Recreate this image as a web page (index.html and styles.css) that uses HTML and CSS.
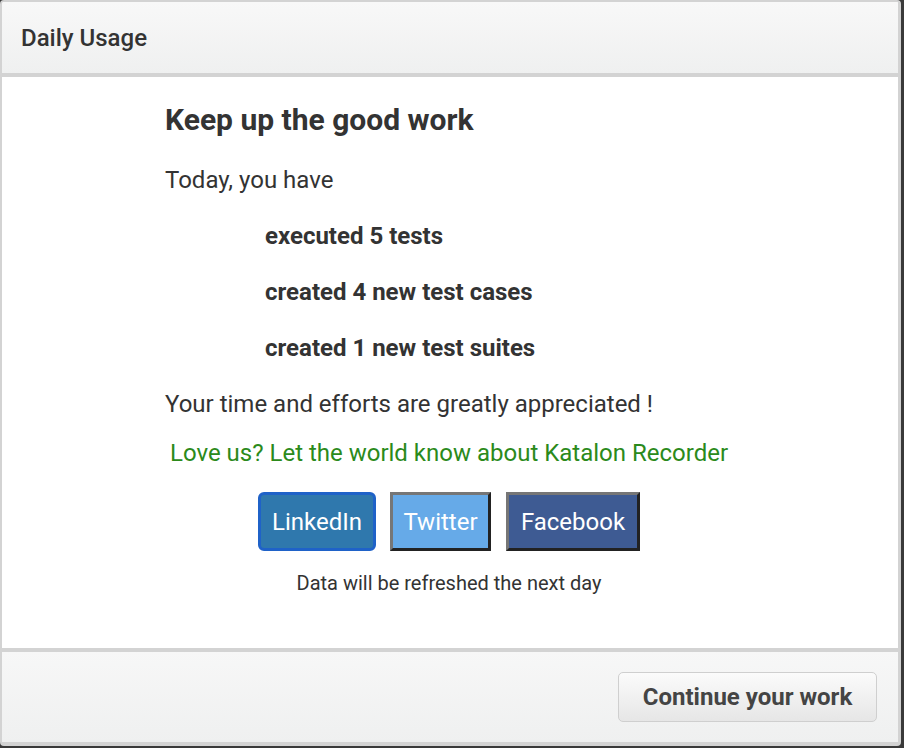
FILE: index.html
```html
<!DOCTYPE html>
<html>
<head>
<meta charset="utf-8">
<link rel="stylesheet" href="styles.css">
</head>
<body>
<div class="dialog">
  <div class="header"><span class="title">Daily Usage</span></div>
  <div class="main">
    <div class="content">
      <h2 class="headline">Keep up the good work</h2>
      <p class="line intro">Today, you have</p>
      <p class="stat">executed 5 tests</p>
      <p class="stat">created 4 new test cases</p>
      <p class="stat">created 1 new test suites</p>
      <p class="line">Your time and efforts are greatly appreciated !</p>
    </div>
    <p class="love">Love us? Let the world know about Katalon Recorder</p>
    <div class="socials">
      <button class="social linkedin">LinkedIn</button>
      <button class="social twitter">Twitter</button>
      <button class="social facebook">Facebook</button>
    </div>
    <p class="note">Data will be refreshed the next day</p>
  </div>
  <div class="footer">
    <button class="continue">Continue your work</button>
  </div>
</div>
</body>
</html>
```
FILE: styles.css
```css
html, body {
  margin: 0;
  padding: 0;
  background: #3a3a3a;
  height: 100%;
}
body {
  font-family: Roboto, "Liberation Sans", sans-serif;
  color: #333;
}
.dialog {
  box-sizing: border-box;
  width: 901px;
  height: 746px;
  border-style: solid;
  border-color: #d3d3d3;
  border-width: 2px 3px 4px 2px;
  border-radius: 4px;
  background: #fff;
  display: flex;
  flex-direction: column;
  overflow: hidden;
}
.header {
  height: 71px;
  flex: none;
  display: flex;
  align-items: center;
  padding-left: 19px;
  background: linear-gradient(#f8f8f8, #eff0f0);
  border-bottom: 4px solid #d3d3d3;
}
.title {
  font-size: 24px;
  font-weight: 500;
  color: #333;
}
.main {
  flex: 1;
  background: #fff;
  display: flex;
  flex-direction: column;
  align-items: center;
  padding-right: 2px;
}
.content {
  align-self: stretch;
  padding-left: 163px;
}
.headline {
  margin: 26px 0 0;
  font-size: 30px;
  font-weight: 700;
  line-height: 34px;
}
.line {
  margin: 22px 0 0;
  font-size: 24px;
  line-height: 34px;
}
.intro {
  margin-top: 26px;
}
.stat {
  margin: 22px 0 0 100px;
  font-size: 24px;
  font-weight: 700;
  line-height: 34px;
}
.love {
  margin: 15px 0 0;
  font-size: 24px;
  line-height: 34px;
  color: #2b8a1b;
}
.socials {
  display: flex;
  margin-top: 22px;
}
.social {
  box-sizing: border-box;
  font-family: Roboto, "Liberation Sans", sans-serif;
  font-size: 24px;
  color: #fff;
  height: 59px;
  padding: 0;
  border-width: 3px;
  border-style: solid;
  border-color: #767676 #222 #222 #767676;
  border-radius: 0;
}
.linkedin {
  width: 118px;
  background: #2f78ad;
  border-color: #1f62c8;
  border-radius: 6px;
}
.twitter {
  width: 101px;
  margin-left: 14px;
  background: #66aae8;
}
.facebook {
  width: 134px;
  margin-left: 15px;
  background: #3e5b93;
}
.note {
  margin: 20px 0 0;
  font-size: 20px;
  line-height: 24px;
}
.footer {
  flex: none;
  height: 90px;
  border-top: 4px solid #d3d3d3;
  background: linear-gradient(#f7f7f7, #eff0f0);
  display: flex;
  align-items: center;
  justify-content: flex-end;
  padding-right: 21px;
}
.continue {
  font-family: Roboto, "Liberation Sans", sans-serif;
  font-size: 24px;
  font-weight: 700;
  color: #444;
  width: 259px;
  height: 50px;
  border: 1px solid #cfcfcf;
  border-radius: 5px;
  background: linear-gradient(#fbfbfb, #e6e6e6);
}
```
